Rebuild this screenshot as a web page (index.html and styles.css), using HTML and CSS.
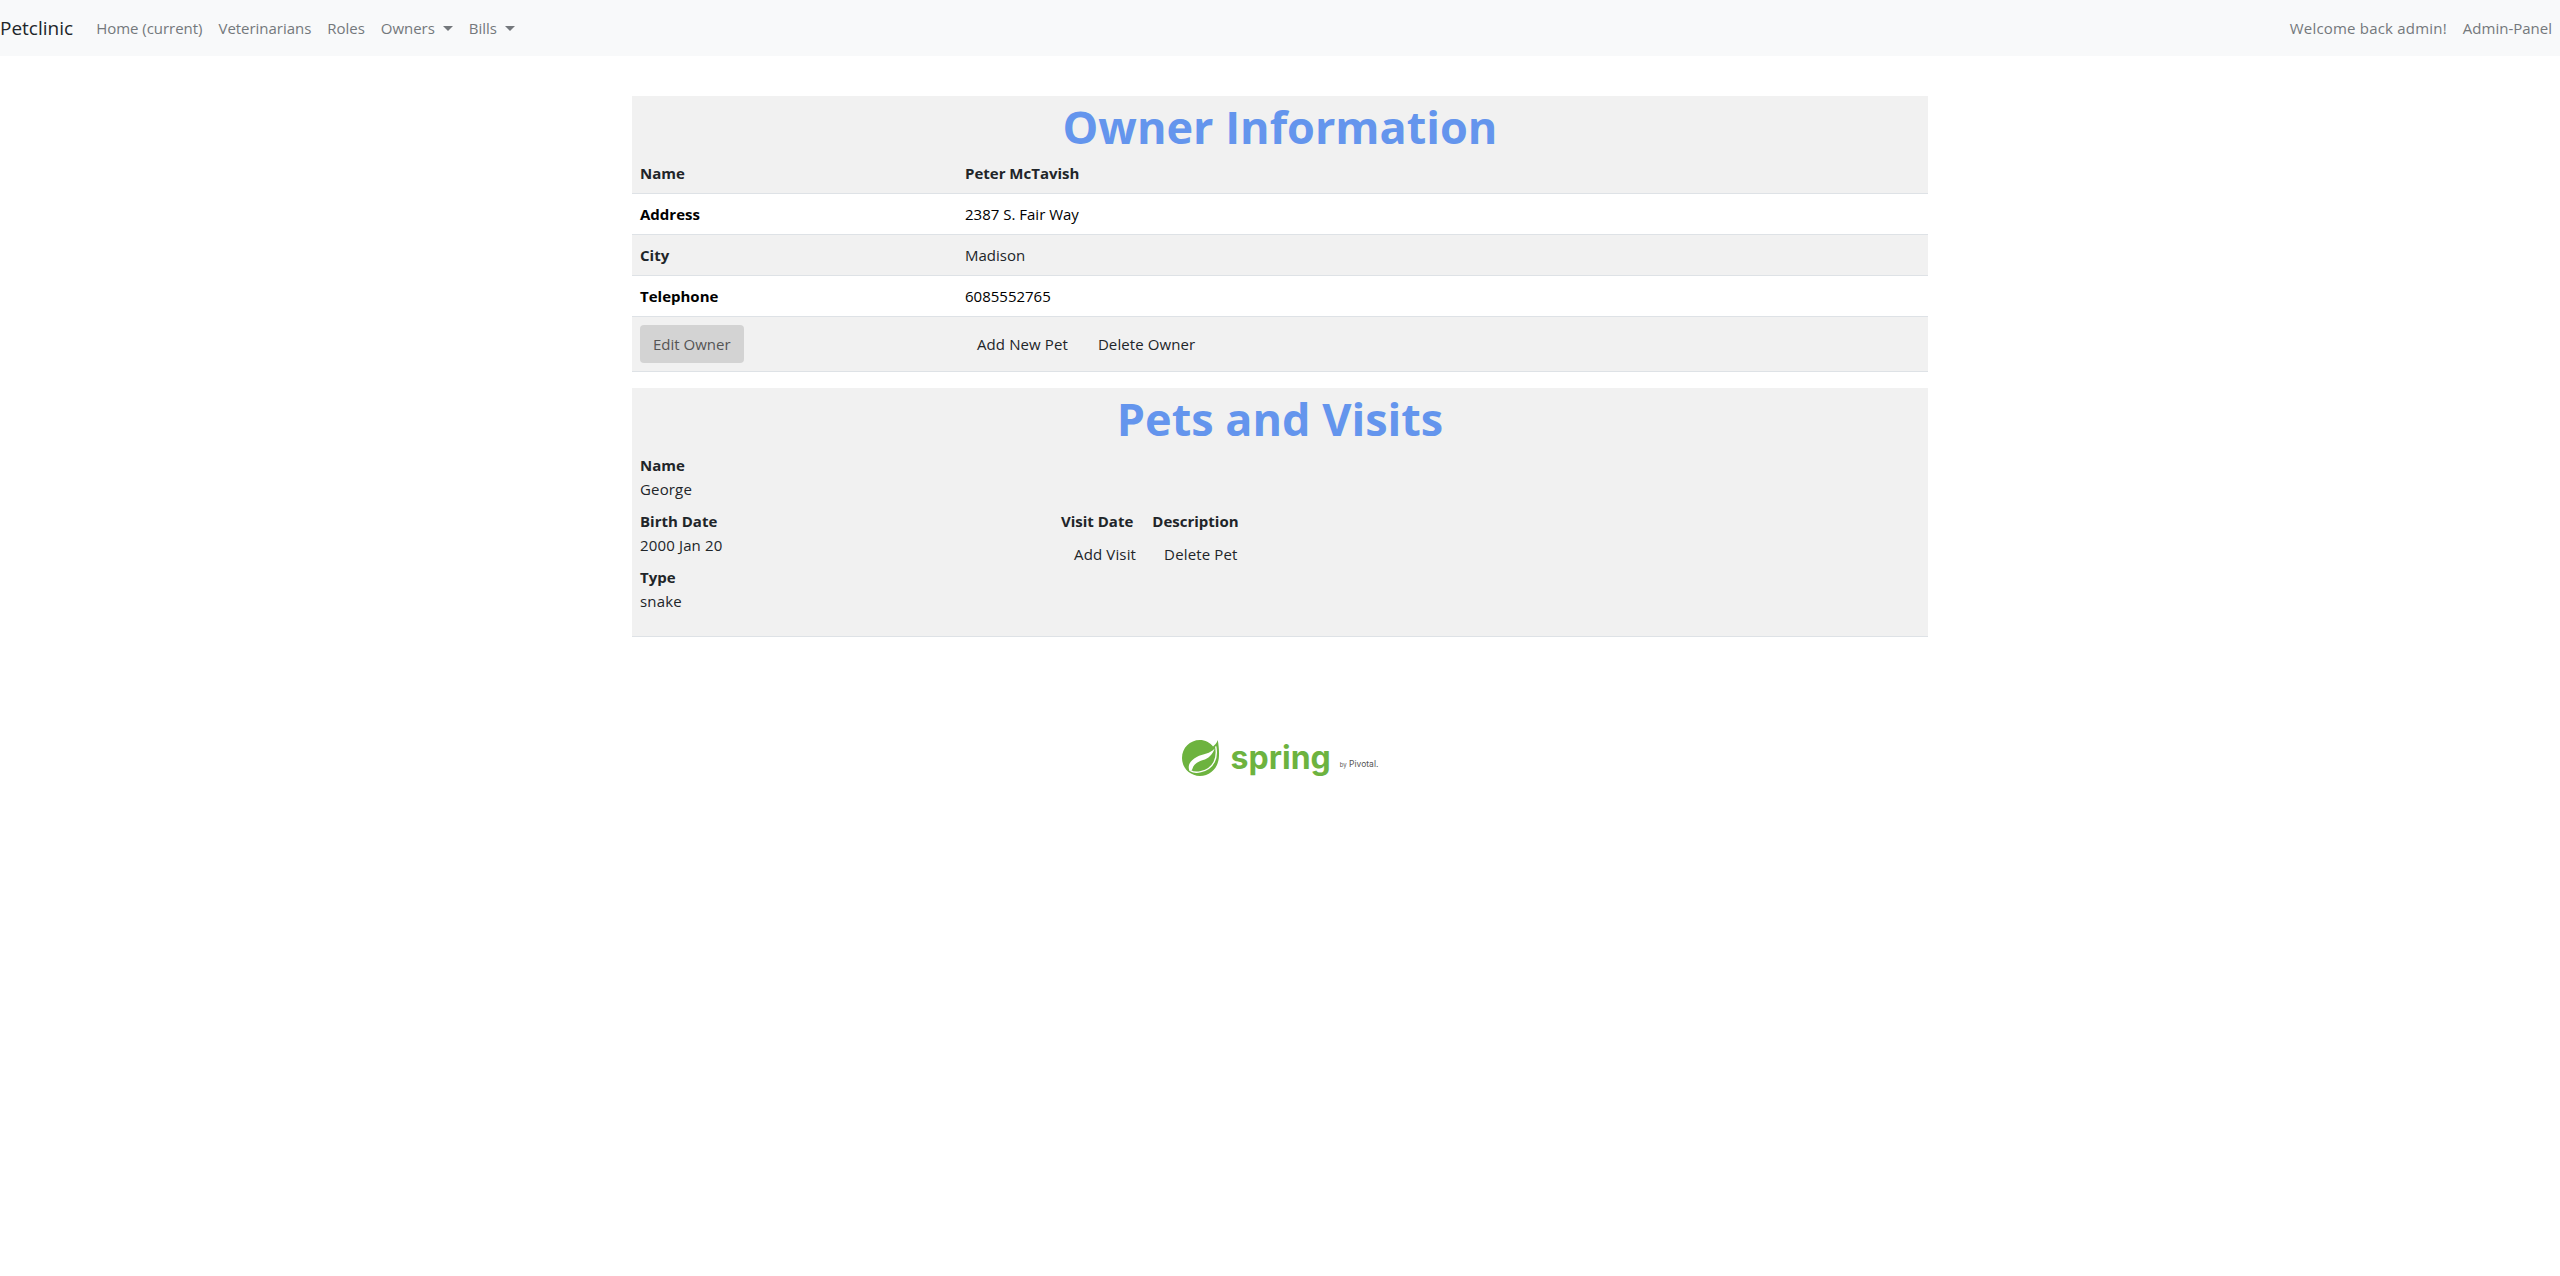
FILE: index.html
```html
<!DOCTYPE html>
<html lang="en">
<head>
    <meta charset="UTF-8">
    <meta name="viewport" content="width=device-width, initial-scale=1.0">
    <title>Petclinic</title>
    <link rel="stylesheet" href="styles.css">
</head>
<body>
    <nav class="navbar">
        <a class="brand" href="#">Petclinic</a>
        <ul class="nav-list nav-left">
            <li><a href="#">Home (current)</a></li>
            <li><a href="#">Veterinarians</a></li>
            <li><a href="#">Roles</a></li>
            <li><a class="dropdown" href="#">Owners</a></li>
            <li><a class="dropdown" href="#">Bills</a></li>
        </ul>
        <ul class="nav-list nav-right">
            <li><span class="welcome">Welcome back admin!</span></li>
            <li><a href="#">Admin-Panel</a></li>
        </ul>
    </nav>

    <div class="container">
        <table class="owner-table">
            <colgroup>
                <col class="label-col">
                <col>
            </colgroup>
            <tbody>
                <tr class="title-row">
                    <td colspan="2"><h1>Owner Information</h1></td>
                </tr>
                <tr class="shaded">
                    <th>Name</th>
                    <td><b>Peter McTavish</b></td>
                </tr>
                <tr>
                    <th class="strong-label">Address</th>
                    <td class="dark">2387 S. Fair Way</td>
                </tr>
                <tr class="shaded">
                    <th>City</th>
                    <td>Madison</td>
                </tr>
                <tr>
                    <th class="strong-label">Telephone</th>
                    <td class="dark">6085552765</td>
                </tr>
                <tr class="shaded">
                    <td><a class="btn btn-edit" href="#">Edit Owner</a></td>
                    <td class="actions">
                        <a class="btn" href="#">Add New Pet</a>
                        <a class="btn" href="#">Delete Owner</a>
                    </td>
                </tr>
            </tbody>
        </table>

        <section class="pets">
            <h1>Pets and Visits</h1>
            <div class="pet-row">
                <dl class="pet-info">
                    <dt>Name</dt>
                    <dd>George</dd>
                    <dt>Birth Date</dt>
                    <dd>2000 Jan 20</dd>
                    <dt>Type</dt>
                    <dd>snake</dd>
                </dl>
                <div class="visits">
                    <div class="visit-head">
                        <b>Visit Date</b>
                        <b>Description</b>
                    </div>
                    <div class="visit-actions">
                        <a class="btn" href="#">Add Visit</a>
                        <a class="btn" href="#">Delete Pet</a>
                    </div>
                </div>
            </div>
        </section>

        <div class="logo">
            <svg class="leaf" width="40" height="36" viewBox="0 0 38 34">
                <path fill="#6db33f" d="M34 0C33 3 31 5 29.500 6 26.500 2.500 22 0 17 0 7.500 0 0 7.500 0 17S7.500 34 17 34 34 27 35 17C35.500 12 35 6 34 0Z"/>
                <path fill="#fff" d="M31 8C27 13 20 13 14 16 8 19 5 24 7 29 8 30 10 28 10 27 11 23 15 20.500 20 19 25 17.500 29 14 31 8Z"/>
                <path fill="none" stroke="#fff" stroke-width="1.300" d="M32 6C34 16 31 27 18 30 14 31 11 31 8 29"/>
            </svg>
            <span class="logo-word">spring</span>
            <span class="logo-by"><small>by</small> Pivotal.</span>
        </div>
    </div>
</body>
</html>
```

FILE: styles.css
```css
body {
    font-family: "Open Sans", "Noto Sans", sans-serif;
    font-size: 15px;
    line-height: 24px;
    color: #212529;
    background-color: #fff;
    margin: 0;
}
a {
    color: inherit;
    text-decoration: none;
}
ul {
    list-style: none;
    margin: 0;
    padding: 0;
}

/* navbar */
.navbar {
    display: flex;
    align-items: center;
    height: 56px;
    background-color: #f8f9fa;
}
.brand {
    font-size: 19px;
    margin-right: 15px;
    color: #212529;
}
.nav-list {
    display: flex;
    color: #74787c;
}
.nav-list li {
    padding: 8px;
}
.nav-left {
    letter-spacing: -.03px;
}
.nav-right {
    margin-left: auto;
}
.welcome {
    letter-spacing: .2px;
}
.dropdown::after {
    content: "";
    display: inline-block;
    margin-left: 8px;
    vertical-align: 3px;
    border-top: 5px solid;
    border-left: 5px solid transparent;
    border-right: 5px solid transparent;
}

/* tables */
.container {
    width: 1296px;
    margin: 0 auto;
    padding-top: 40px;
}
h1 {
    font-size: 45px;
    line-height: 53px;
    padding-top: 4px;
    font-weight: 700;
    color: #6495ed;
    text-align: center;
    margin: 0;
}
.owner-table {
    width: 100%;
    border-collapse: collapse;
    table-layout: fixed;
    margin-bottom: 16px;
}
.label-col {
    width: 325px;
}
.owner-table td,
.owner-table th {
    padding: 8px;
    text-align: left;
    border-bottom: 1px solid #dee2e6;
    font-weight: 400;
}
.owner-table th {
    font-weight: 700;
}
.owner-table .title-row td {
    padding: 0;
    border-bottom: 0;
    background-color: #f1f1f1;
}
.shaded {
    background-color: #f1f1f1;
}
.strong-label,
.dark {
    color: #000;
}
.btn {
    display: inline-block;
    padding: 7px 13px;
    border-radius: 4px;
}
.btn-edit {
    background-color: #d3d3d3;
    color: #555;
}
.actions {
    letter-spacing: .1px;
}
.actions .btn:first-child {
    padding-left: 12px;
}

/* pets */
.pets {
    background-color: #f1f1f1;
    border-bottom: 1px solid #dee2e6;
    height: 248px;
}
.pet-row {
    display: flex;
    padding: 8px;
}
.pet-info {
    width: 421px;
    margin: 0;
}
.pet-info dt {
    font-weight: 700;
}
.pet-info dd {
    margin: 0 0 8px;
    letter-spacing: .15px;
}
.visits {
    margin-top: 56px;
}
.visit-head {
    display: flex;
    gap: 19px;
}
.visit-actions {
    display: flex;
    gap: 2px;
    padding-top: 2px;
    letter-spacing: .15px;
}

/* footer logo */
.logo {
    display: flex;
    align-items: center;
    justify-content: center;
    margin-top: 103px;
    height: 36px;
}
.leaf {
    margin-right: 9px;
}
.logo-word {
    font-family: Inter, "Open Sans", sans-serif;
    font-size: 32px;
    font-weight: 700;
    color: #6db33f;
    margin-right: 9px;
}
.logo-by {
    font-family: Inter, "Open Sans", sans-serif;
    font-size: 8.500px;
    color: #555;
    padding-top: 12px;
}
.logo-by small {
    font-size: 6px;
}
```
